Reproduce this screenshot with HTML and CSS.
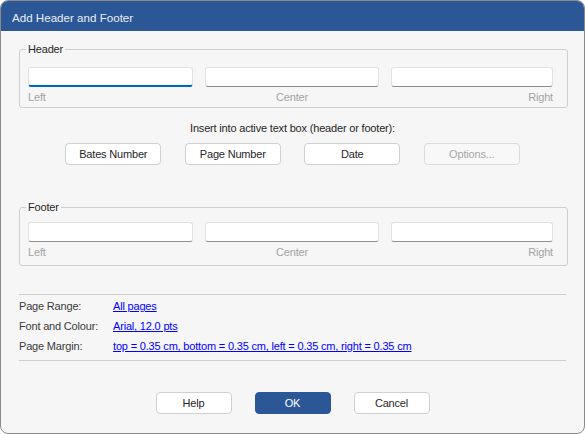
FILE: index.html
```html
<!DOCTYPE html>
<html>
<head>
<meta charset="utf-8">
<link rel="stylesheet" href="styles.css">
</head>
<body>
<div class="window">
  <div class="titlebar">Add Header and Footer</div>
  <div class="content">
    <fieldset class="group group-header">
      <legend>Header</legend>
      <div class="fields">
        <div class="field f-left"><div class="input focused"></div><div class="cap">Left</div></div>
        <div class="field f-center"><div class="input"></div><div class="cap">Center</div></div>
        <div class="field f-right"><div class="input"></div><div class="cap">Right</div></div>
      </div>
    </fieldset>
    <div class="insert-label">Insert into active text box (header or footer):</div>
    <div class="insert-buttons">
      <button class="btn">Bates Number</button>
      <button class="btn">Page Number</button>
      <button class="btn">Date</button>
      <button class="btn disabled">Options...</button>
    </div>
    <fieldset class="group group-footer">
      <legend>Footer</legend>
      <div class="fields">
        <div class="field f-left"><div class="input"></div><div class="cap">Left</div></div>
        <div class="field f-center"><div class="input"></div><div class="cap">Center</div></div>
        <div class="field f-right"><div class="input"></div><div class="cap">Right</div></div>
      </div>
    </fieldset>
    <div class="settings">
      <div class="row"><span class="key">Page Range:</span><a class="val" href="#">All pages</a></div>
      <div class="row"><span class="key">Font and Colour:</span><a class="val" href="#">Arial, 12.0 pts</a></div>
      <div class="row"><span class="key">Page Margin:</span><a class="val" href="#">top = 0.35 cm, bottom = 0.35 cm, left = 0.35 cm, right = 0.35 cm</a></div>
    </div>
    <div class="actions">
      <button class="btn action">Help</button>
      <button class="btn action primary">OK</button>
      <button class="btn action">Cancel</button>
    </div>
  </div>
</div>
</body>
</html>
```

FILE: styles.css
```css
html, body {
  margin: 0;
  padding: 0;
  background: #ffffff;
}
body {
  font-family: "Liberation Sans", Arial, sans-serif;
  font-size: 11px;
  letter-spacing: -0.18px;
  color: #262626;
}
.window {
  box-sizing: border-box;
  width: 585px;
  height: 434px;
  border: 1px solid #8a8a8a;
  border-radius: 8px;
  overflow: hidden;
  background: #f6f6f6;
  display: flex;
  flex-direction: column;
}
.titlebar {
  box-sizing: border-box;
  height: 30px;
  padding: 4px 0 0 11px;
  background: #2b5797;
  color: #e8edf5;
  font-size: 11.6px;
  letter-spacing: 0;
  line-height: 26px;
}
.content {
  padding: 0 18px;
  display: flex;
  flex-direction: column;
}
.group {
  margin: 0;
  border: 1px solid #cecece;
  border-radius: 3px;
  padding: 0 14px 2px 8px;
}
.group legend {
  padding: 0 2px;
  margin-left: -2px;
  line-height: 16px;
  color: #262626;
}
.group-header {
  margin-top: 10px;
}
.group-footer {
  margin-top: 34px;
  padding-bottom: 5px;
}
.fields {
  display: flex;
  gap: 12px;
  margin-top: 10px;
}
.group-footer .fields {
  margin-top: 7px;
}
.field {
  display: flex;
  flex-direction: column;
}
.f-left { width: 165px; }
.f-center { width: 174px; }
.f-right { width: 162px; }
.input {
  box-sizing: border-box;
  height: 20px;
  background: #ffffff;
  border: 1px solid #e1e1e1;
  border-bottom-color: #8d8d8d;
  border-radius: 3px;
}
.input.focused {
  border-bottom: 2px solid #0067c0;
}
.cap {
  color: #a3a3a3;
  line-height: 16px;
  margin-top: 2px;
}
.f-center .cap { text-align: center; }
.f-right .cap { text-align: right; }
.insert-label {
  text-align: center;
  margin-top: 12px;
  line-height: 16px;
}
.insert-buttons {
  display: flex;
  justify-content: center;
  gap: 23.5px;
  margin-top: 7px;
}
.btn {
  box-sizing: border-box;
  width: 96px;
  height: 22px;
  padding: 0;
  font-family: inherit;
  font-size: 11px;
  letter-spacing: -0.18px;
  color: #262626;
  background: #ffffff;
  border: 1px solid #d0d0d0;
  border-radius: 4px;
}
.btn.disabled {
  color: #a6a6a6;
  border-color: #dcdcdc;
  background: #f8f8f8;
}
.settings {
  margin-top: 28px;
  border-top: 1px solid #cecece;
  border-bottom: 1px solid #cecece;
  padding: 1px 0 4px 0;
}
.row {
  display: flex;
  line-height: 20px;
  height: 20px;
}
.key {
  width: 94px;
  color: #3a3a3a;
}
.val {
  color: #0000ff;
  text-decoration: underline;
}
.actions {
  display: flex;
  justify-content: center;
  gap: 23px;
  margin-top: 31px;
}
.btn.action {
  width: 76px;
}
.btn.primary {
  background: #2b5797;
  border-color: #2b5797;
  color: #ffffff;
}
```
